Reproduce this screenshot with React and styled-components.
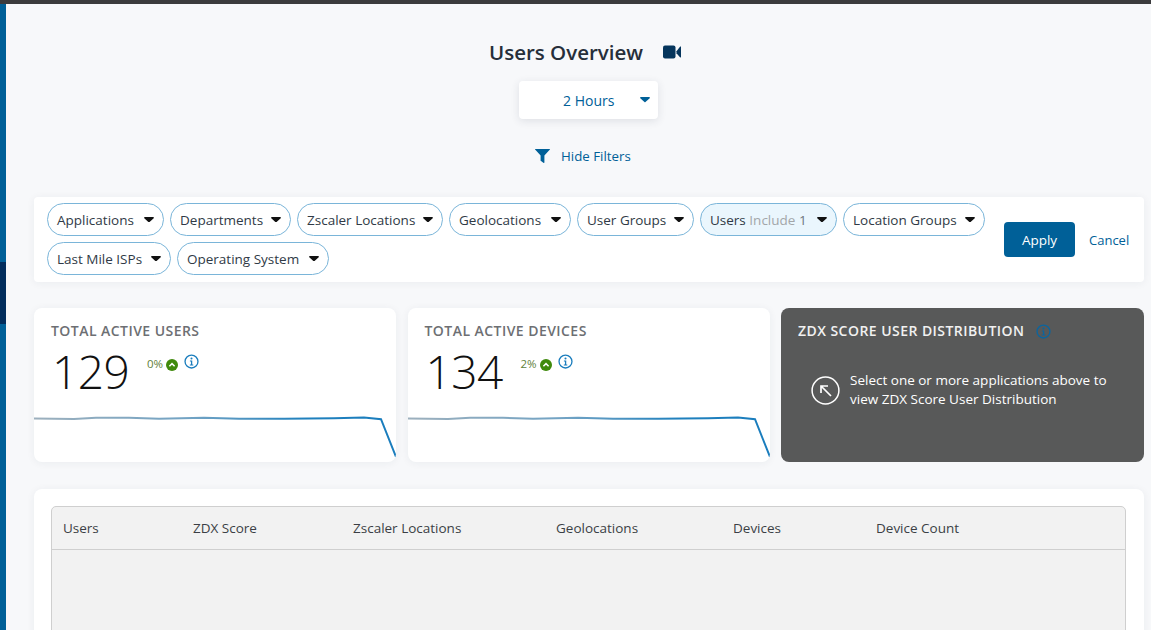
import React from 'react';
import styled, {createGlobalStyle} from 'styled-components';

const GlobalStyle = createGlobalStyle`
    html, body {
        margin: 0;
        height: 100%;
        overflow: hidden;
        background: #f7f8fa;
        font-family: "Open Sans", "Noto Sans", sans-serif;
    }
    * { box-sizing: border-box; }
`;

const filters = [
    {label: 'Applications', width: 117},
    {label: 'Departments', width: 121},
    {label: 'Zscaler Locations', width: 146},
    {label: 'Geolocations', width: 122},
    {label: 'User Groups', width: 117},
    {label: 'Users', width: 137, extra: 'Include', count: '1', active: true},
    {label: 'Location Groups', width: 142},
    {label: 'Last Mile ISPs', width: 124},
    {label: 'Operating System', width: 152},
];

const columns = [
    {label: 'Users', width: 130},
    {label: 'ZDX Score', width: 160},
    {label: 'Zscaler Locations', width: 203},
    {label: 'Geolocations', width: 177},
    {label: 'Devices', width: 143},
    {label: 'Device Count', width: 190},
];

const InfoIcon = ({size = 15, color = '#1a7dbd'}) => (
    <svg width={size} height={size} viewBox="0 0 16 16" fill="none">
        <circle cx="8" cy="8" r="6.9" stroke={color} strokeWidth="1.4" />
        <circle cx="8" cy="4.7" r="1.1" fill={color} />
        <path d="M6.3 7h2.5v4.2h1.1v1H6.2v-1h1.2V8H6.3z" fill={color} />
    </svg>
);

const Caret = ({color = '#111', w = 10, h = 5.5}) => (
    <svg width={w} height={h} viewBox="0 0 11 6">
        <path d="M1 0h9c.8 0 1.2.9.7 1.4L6 5.6c-.3.3-.8.3-1.1 0L.3 1.4C-.2.9.2 0 1 0z" fill={color} />
    </svg>
);

const Spark = () => {
    const id = React.useId();
    return (
        <SparkSvg viewBox="0 0 362 46" preserveAspectRatio="none">
            <defs>
                <linearGradient id={id} x1="0" x2="1" y1="0" y2="0">
                    <stop offset="0" stopColor="#9db0bd" />
                    <stop offset="0.45" stopColor="#6fa2c4" />
                    <stop offset="0.75" stopColor="#1f80bd" />
                    <stop offset="1" stopColor="#1a7dbd" />
                </linearGradient>
            </defs>
            <path
                d="M0 2.6 L40 2.9 L62 1.8 L95 1.8 L125 2.8 L170 1.8 L205 2.8 L250 2.8 L300 2.2 L330 1.6 L347 3.2 L362 41"
                fill="none"
                stroke={`url(#${id})`}
                strokeWidth="2"
            />
        </SparkSvg>
    );
};

const StatCard = ({title, value, delta}) => (
    <Card>
        <CardTitle>{title}</CardTitle>
        <StatRow>
            <StatValue>{value}</StatValue>
            <Delta>{delta}</Delta>
            <UpBadge>
                <svg width="12" height="12" viewBox="0 0 12 12">
                    <circle cx="6" cy="6" r="6" fill="#3f8a0c" />
                    <path d="M3.4 7.2 6 4.6l2.6 2.6" fill="none" stroke="#fff" strokeWidth="1.5" />
                </svg>
            </UpBadge>
            <InfoWrap><InfoIcon /></InfoWrap>
        </StatRow>
        <Spark />
    </Card>
);

const App = () => (
    <>
        <GlobalStyle />
        <TopBar />
        <Shell>
            <Rail>
                <RailPart $height={258} />
                <RailPart $height={62} $dark />
                <RailPart $height={306} />
            </Rail>
            <Main>
                <TitleRow>
                    <Title>Users Overview</Title>
                    <svg width="18" height="14" viewBox="0 0 18 14">
                        <rect x="0" y="0.5" width="12.5" height="13" rx="2" fill="#05355c" />
                        <path d="M13.5 6.2 17.2 1.6c.3-.3.8-.1.8.3v10.2c0 .4-.5.6-.8.3l-3.7-4.2z" fill="#05355c" />
                    </svg>
                </TitleRow>
                <RangeSelect>
                    <RangeText>2 Hours</RangeText>
                    <Caret color="#006098" />
                </RangeSelect>
                <FilterToggle>
                    <svg width="15" height="14" viewBox="0 0 15 14">
                        <path d="M0.3 0h14.4c.3 0 .4.3.2.5L9.4 6.6v6.9c0 .4-.4.6-.7.4L6 12c-.3-.1-.4-.3-.4-.6v-4.8L.1.5C-.1.3 0 0 .3 0z" fill="#006098" />
                    </svg>
                    <span>Hide Filters</span>
                </FilterToggle>
                <FilterPanel>
                    <Chips>
                        {filters.map(f => (
                            <Chip key={f.label} $active={f.active} $width={f.width}>
                                <span>
                                    {f.label}
                                    {f.extra && <ChipExtra> {f.extra}</ChipExtra>}
                                    {f.count && <ChipCount> {f.count}</ChipCount>}
                                </span>
                                <Caret />
                            </Chip>
                        ))}
                    </Chips>
                    <Actions>
                        <ApplyButton>Apply</ApplyButton>
                        <CancelLink>Cancel</CancelLink>
                    </Actions>
                </FilterPanel>
                <CardRow>
                    <StatCard title="Total Active Users" value="129" delta="0%" />
                    <StatCard title="Total Active Devices" value="134" delta="2%" />
                    <DarkCard>
                        <DarkTitleRow>
                            <CardTitle $light>ZDX Score User Distribution</CardTitle>
                            <InfoIcon color="#0a659f" />
                        </DarkTitleRow>
                        <Hint>
                            <svg width="29" height="29" viewBox="0 0 29 29" fill="none" stroke="#fff">
                                <circle cx="14.5" cy="14.5" r="13.4" strokeWidth="1.5" />
                                <path d="M20 20 10 10M10 17v-7h7" strokeWidth="1.7" />
                            </svg>
                            <HintText>Select one or more applications above to view ZDX Score User Distribution</HintText>
                        </Hint>
                    </DarkCard>
                </CardRow>
                <TableCard>
                    <Table>
                        <TableHead>
                            {columns.map(c => (
                                <HeadCell key={c.label} $width={c.width}>{c.label}</HeadCell>
                            ))}
                        </TableHead>
                    </Table>
                </TableCard>
            </Main>
        </Shell>
    </>
);

const TopBar = styled.div`
    height: 4px;
    background: #3b3b3d;
`;

const Shell = styled.div`
    display: flex;
    height: 626px;
    overflow: hidden;
`;

const Rail = styled.div`
    width: 6px;
    flex: none;
`;

const RailPart = styled.div`
    height: ${p => p.$height}px;
    background: ${p => (p.$dark ? '#022d5c' : '#006098')};
`;

const Main = styled.main`
    flex: 1;
    min-width: 0;
    padding: 0 7px 0 28px;
    display: flex;
    flex-direction: column;
    & > * { flex: none; }
`;

const TitleRow = styled.div`
    display: flex;
    justify-content: center;
    align-items: center;
    gap: 20px;
    margin-top: 33px;
    height: 30px;
    padding-right: 8px;
`;

const Title = styled.h1`
    margin: 0;
    font-size: 20.5px;
    font-weight: 600;
    color: #262f3a;
`;

const RangeSelect = styled.div`
    align-self: flex-start;
    margin: 14px 0 0 485px;
    width: 139px;
    height: 38px;
    background: #fff;
    border-radius: 4px;
    box-shadow: 0 2px 8px rgba(40, 50, 70, 0.12);
    display: flex;
    align-items: center;
    padding-left: 44px;
`;

const RangeText = styled.span`
    width: 77px;
    font-size: 14px;
    color: #006098;
`;

const FilterToggle = styled.div`
    align-self: flex-start;
    margin: 29px 0 0 501px;
    height: 16px;
    display: flex;
    align-items: center;
    gap: 11px;
    font-size: 13.3px;
    color: #006098;
`;

const FilterPanel = styled.section`
    margin-top: 33px;
    height: 85px;
    background: #fff;
    border-radius: 4px;
    box-shadow: 0 1px 8px rgba(40, 50, 70, 0.06);
    display: flex;
    padding: 6px 14px 0 13px;
`;

const Chips = styled.div`
    width: 945px;
    flex: none;
    display: flex;
    flex-wrap: wrap;
    align-content: flex-start;
    gap: 6px;
`;

const Chip = styled.div`
    width: ${p => p.$width}px;
    height: 33px;
    border: 1px solid #7ab5d9;
    border-radius: 17px;
    background: ${p => (p.$active ? '#eaf6fd' : '#fff')};
    padding: 0 9px;
    display: flex;
    align-items: center;
    justify-content: space-between;
    font-size: 13.5px;
    color: #303a46;
    white-space: pre;
`;

const ChipExtra = styled.span`
    color: #a3a6a9;
`;

const ChipCount = styled.span`
    color: #6f7780;
`;

const Actions = styled.div`
    margin-left: 12px;
    height: 35px;
    margin-top: 19px;
    display: flex;
    align-items: center;
    gap: 14px;
`;

const ApplyButton = styled.button`
    width: 71px;
    height: 35px;
    border: 0;
    border-radius: 4px;
    background: #006098;
    color: #fff;
    font: 13.5px "Open Sans", sans-serif;
`;

const CancelLink = styled.span`
    font-size: 13px;
    color: #006098;
`;

const CardRow = styled.div`
    margin-top: 26px;
    display: grid;
    grid-template-columns: 362px 362px 363px;
    gap: 11.5px;
    height: 154px;
`;

const Card = styled.article`
    background: #fff;
    border-radius: 8px;
    box-shadow: 0 1px 8px rgba(40, 50, 70, 0.06);
    display: flex;
    flex-direction: column;
    overflow: hidden;
`;

const CardTitle = styled.h2`
    margin: 0;
    font-size: 14px;
    font-weight: 600;
    letter-spacing: 0.45px;
    text-transform: uppercase;
    color: ${p => (p.$light ? '#f1f1f1' : '#6d6f73')};
    padding: ${p => (p.$light ? '0' : '14px 0 0 17px')};
    line-height: 18px;
    flex: none;
`;

const StatRow = styled.div`
    display: flex;
    align-items: flex-start;
    padding-left: 18px;
    height: 76px;
    flex: none;
`;

const StatValue = styled.div`
    font-size: 46px;
    font-weight: 300;
    line-height: 56px;
    color: #111;
    width: 77px;
    margin: 3px 18px 0 0;
    letter-spacing: -0.5px;
`;

const Delta = styled.span`
    font-size: 11.5px;
    color: #5f7f3a;
    margin-top: 16px;
    margin-right: 3px;
`;

const UpBadge = styled.span`
    display: flex;
    margin-top: 19px;
    margin-right: 6px;
`;

const InfoWrap = styled.span`
    display: flex;
    margin-top: 14px;
`;

const SparkSvg = styled.svg`
    display: block;
    width: 100%;
    height: 46px;
    flex: none;
`;

const DarkCard = styled.article`
    background: #585959;
    border-radius: 8px;
    padding: 14px 17px;
`;

const DarkTitleRow = styled.div`
    display: flex;
    align-items: center;
    gap: 12px;
`;

const Hint = styled.div`
    display: flex;
    align-items: center;
    gap: 10px;
    margin: 31px 0 0 13px;
`;

const HintText = styled.p`
    margin: 0;
    width: 275px;
    font-size: 13.5px;
    line-height: 19px;
    color: #fff;
`;

const TableCard = styled.section`
    margin-top: 27px;
    height: 300px;
    background: #fff;
    border-radius: 8px;
    box-shadow: 0 1px 8px rgba(40, 50, 70, 0.06);
    padding: 17px 18px 0 17px;
`;

const Table = styled.div`
    height: 300px;
    background: #f2f2f2;
    border: 1px solid #cfcfcf;
    border-radius: 5px 5px 0 0;
`;

const TableHead = styled.div`
    display: flex;
    height: 43px;
    align-items: center;
    border-bottom: 1px solid #cfcfcf;
    padding-left: 11px;
`;

const HeadCell = styled.div`
    width: ${p => p.$width}px;
    font-size: 13.5px;
    color: #3b3f45;
`;

export default App;
